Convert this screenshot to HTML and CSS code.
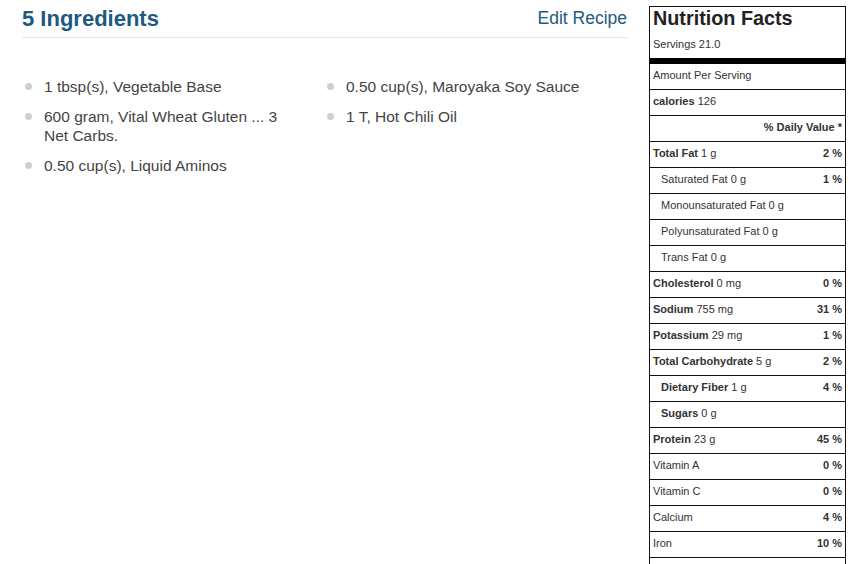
FILE: index.html
```html
<!DOCTYPE html>
<html>
<head>
<meta charset="utf-8">
<link rel="stylesheet" href="styles.css">
</head>
<body>
<div class="page">
  <section class="ingredients">
    <header class="ing-head">
      <h2 class="ing-title">5 Ingredients</h2>
      <a class="edit-link" href="#">Edit Recipe</a>
    </header>
    <div class="ing-cols">
      <ul class="ing-list">
        <li>1 tbsp(s), Vegetable Base</li>
        <li>600 gram, Vital Wheat Gluten ... 3 Net Carbs.</li>
        <li>0.50 cup(s), Liquid Aminos</li>
      </ul>
      <ul class="ing-list">
        <li>0.50 cup(s), Maroyaka Soy Sauce</li>
        <li>1 T, Hot Chili Oil</li>
      </ul>
    </div>
  </section>
  <aside class="nf">
    <div class="nf-head">
      <div class="nf-title">Nutrition Facts</div>
      <div class="nf-serv">Servings 21.0</div>
    </div>
    <div class="nf-row">Amount Per Serving</div>
    <div class="nf-row"><span><b>calories</b> 126</span></div>
    <div class="nf-row nf-right"><b>% Daily Value *</b></div>
    <div class="nf-row"><span><b>Total Fat</b> 1 g</span><b>2 %</b></div>
    <div class="nf-row nf-sub"><span>Saturated Fat 0 g</span><b>1 %</b></div>
    <div class="nf-row nf-sub"><span>Monounsaturated Fat 0 g</span></div>
    <div class="nf-row nf-sub"><span>Polyunsaturated Fat 0 g</span></div>
    <div class="nf-row nf-sub"><span>Trans Fat 0 g</span></div>
    <div class="nf-row"><span><b>Cholesterol</b> 0 mg</span><b>0 %</b></div>
    <div class="nf-row"><span><b>Sodium</b> 755 mg</span><b>31 %</b></div>
    <div class="nf-row"><span><b>Potassium</b> 29 mg</span><b>1 %</b></div>
    <div class="nf-row"><span><b>Total Carbohydrate</b> 5 g</span><b>2 %</b></div>
    <div class="nf-row nf-sub"><span><b>Dietary Fiber</b> 1 g</span><b>4 %</b></div>
    <div class="nf-row nf-sub"><span><b>Sugars</b> 0 g</span></div>
    <div class="nf-row"><span><b>Protein</b> 23 g</span><b>45 %</b></div>
    <div class="nf-row"><span>Vitamin A</span><b>0 %</b></div>
    <div class="nf-row"><span>Vitamin C</span><b>0 %</b></div>
    <div class="nf-row"><span>Calcium</span><b>4 %</b></div>
    <div class="nf-row"><span>Iron</span><b>10 %</b></div>
    <div class="nf-row"><span>&nbsp;</span></div>
  </aside>
</div>
</body>
</html>
```

FILE: styles.css
```css
html, body {
  margin: 0;
  padding: 0;
  overflow: hidden;
  background: #fff;
}
body {
  font-family: "Liberation Sans", Arial, sans-serif;
  color: #333;
}
.page {
  display: flex;
  align-items: flex-start;
  padding: 6px 0 0 22px;
  gap: 22px;
}
.ingredients {
  width: 605px;
  flex: none;
}
.ing-head {
  display: flex;
  justify-content: space-between;
  align-items: flex-start;
  border-bottom: 1px solid #e6e6e6;
  height: 31px;
}
.ing-title {
  margin: 0;
  font-size: 22px;
  line-height: 26px;
  font-weight: bold;
  color: #1d5a80;
}
.edit-link {
  font-size: 17.5px;
  line-height: 24px;
  color: #1d5a80;
  text-decoration: none;
}
.ing-cols {
  display: grid;
  grid-template-columns: 302px 302px;
  margin-top: 39px;
}
.ing-list {
  list-style: none;
  margin: 0;
  padding: 0;
}
.ing-list li {
  position: relative;
  padding: 0 40px 0 22px;
  font-size: 15.5px;
  line-height: 19px;
  color: #444;
  margin-bottom: 11px;
}
.ing-list li::before {
  content: "";
  position: absolute;
  left: 3px;
  top: 6px;
  width: 7px;
  height: 7px;
  border-radius: 50%;
  background: #cfcfcf;
}
.nf {
  width: 195px;
  flex: none;
  border: 1px solid #111;
  border-bottom: none;
  font-size: 11px;
  color: #333;
}
.nf-head {
  padding: 1px 3px 7px;
  border-bottom: 6px solid #000;
}
.nf-title {
  font-size: 19.8px;
  line-height: 21px;
  font-weight: bold;
  color: #222;
}
.nf-serv {
  margin-top: 8px;
  line-height: 14px;
}
.nf-row {
  display: flex;
  justify-content: space-between;
  align-items: center;
  height: 22px;
  padding: 0 3px 3px 3px;
  border-bottom: 1px solid #111;
  box-sizing: content-box;
}
.nf-row b {
  font-weight: bold;
}
.nf-right {
  justify-content: flex-end;
}
.nf-sub {
  padding-left: 11px;
}
```
